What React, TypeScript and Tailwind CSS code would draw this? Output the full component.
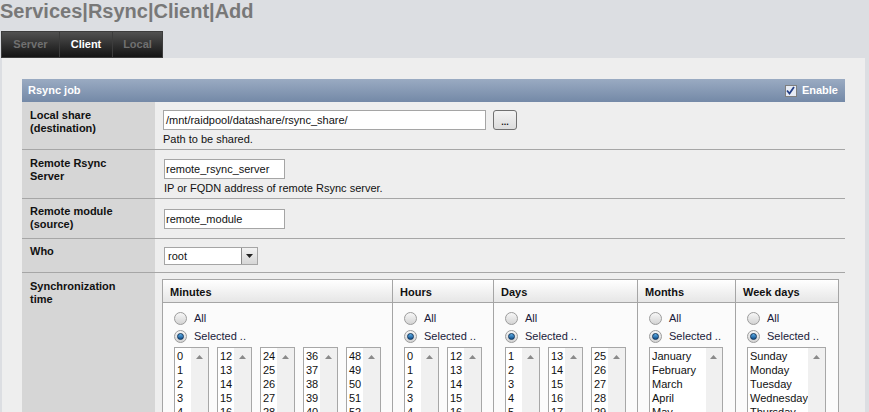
import React from 'react';

const range = (a: number, b: number) => Array.from({ length: b - a + 1 }, (_, i) => String(a + i));

function Radio({ checked }: { checked?: boolean }) {
    return (
        <span className="relative inline-flex h-[13px] w-[13px] items-center justify-center rounded-full border border-[#9c9c9c] bg-gradient-to-b from-[#f7f7f7] to-[#d4d4d4]">
            {checked && (
                <span className="h-[7px] w-[7px] rounded-full border border-[#10345a] bg-gradient-to-b from-[#5fb0e8] to-[#0d4f8c]" />
            )}
        </span>
    );
}

function ListBox({ items, w }: { items: string[]; w: string }) {
    return (
        <div className={`flex h-[72px] shrink-0 overflow-hidden border border-[#a7a7a7] bg-white ${w}`}>
            <div className="flex-1 pl-[2px] pt-[1px] leading-[14px] text-[#111]">
                {items.map((i) => (
                    <div key={i}>{i}</div>
                ))}
            </div>
            <div className="flex w-[17px] justify-center bg-[#f0f0f0] pt-[7px]">
                <svg width="7" height="4" viewBox="0 0 7 4">
                    <path d="M0 4 L3.5 0 L7 4 Z" fill="#8a8a8a" />
                </svg>
            </div>
        </div>
    );
}

function SyncCol({ title, w, lists }: { title: string; w: string; lists: { items: string[]; w: string }[] }) {
    return (
        <div className={`flex flex-col border-r border-[#a5a5a5] last:border-r-0 ${w}`}>
            <div className="h-[23px] border-b border-[#a5a5a5] bg-gradient-to-b from-white to-[#e6e6e6] pl-[7px] pt-[4px] font-bold text-[#111]">
                {title}
            </div>
            <div className="bg-[#fbfbfb] pl-[11px] pt-[6px]">
                <div className="flex h-[18px] items-center gap-[7px] text-[#1a1a3a]">
                    <Radio />
                    <span>All</span>
                </div>
                <div className="flex h-[18px] items-center gap-[7px] text-[#1a1a3a]">
                    <Radio checked />
                    <span>Selected ..</span>
                </div>
                <div className="mt-[2px] flex gap-[8px]">
                    {lists.map((l, i) => (
                        <ListBox key={i} items={l.items} w={l.w} />
                    ))}
                </div>
            </div>
        </div>
    );
}

export default function App() {
    const months = ['January', 'February', 'March', 'April', 'May', 'June', 'July', 'August', 'September', 'October', 'November', 'December'];
    const days = ['Sunday', 'Monday', 'Tuesday', 'Wednesday', 'Thursday', 'Friday', 'Saturday'];

    return (
        <div className="h-screen overflow-hidden bg-[#dcdee2] font-['Liberation_Sans',Arial,sans-serif] text-[11px] text-[#111]">
            <h1 className="h-[31px] text-[20px] font-bold leading-[23px] text-[#787878]">
                Services|Rsync|Client|Add
            </h1>

            {/* tabs */}
            <div className="ml-[1px] flex h-[27px] font-bold">
                <div className="flex w-[59px] items-center justify-center border border-[#3c3c3c] bg-gradient-to-b from-[#515151] to-[#151515] text-[#707070]">Server</div>
                <div className="flex w-[53px] items-center justify-center border border-l-0 border-[#3c3c3c] bg-gradient-to-b from-[#515151] to-[#151515] text-white">Client</div>
                <div className="flex w-[50px] items-center justify-center border border-l-0 border-[#3c3c3c] bg-gradient-to-b from-[#515151] to-[#151515] text-[#707070]">Local</div>
            </div>

            {/* panel */}
            <div className="ml-[2px] w-[863px] bg-[#eeeeee] px-[20px] pb-[20px] pt-[21px]">
                <div className="flex h-[23px] items-center justify-between bg-gradient-to-b from-[#9aabc2] to-[#7489a7] pl-[6px] pr-[7px] font-bold text-white">
                    <span>Rsync job</span>
                    <span className="flex items-center gap-[5px]">
                        <span className="flex h-[12px] w-[12px] items-center justify-center border border-[#7f7f7f] bg-[#e6ebf4]">
                            <svg width="9" height="9" viewBox="0 0 9 9">
                                <path d="M1 4.5 L3.5 7.5 L8 1" stroke="#243f86" strokeWidth="1.8" fill="none" />
                            </svg>
                        </span>
                        Enable
                    </span>
                </div>

                {/* rows */}
                <div className="flex h-[48px] border-b border-[#a6a6a6]">
                    <div className="w-[133px] bg-[#d6d6d6] pl-[8px] pt-[7px] font-bold leading-[13px]">
                        Local share<br />(destination)
                    </div>
                    <div className="flex-1 pl-[8px] pt-[8px]">
                        <div className="flex items-center gap-[7px]">
                            <div className="flex h-[20px] w-[323px] items-center border border-[#a5a5a5] bg-white pl-[2px]">/mnt/raidpool/datashare/rsync_share/</div>
                            <div className="flex h-[20px] w-[24px] items-end justify-center rounded-[3px] border border-[#707070] bg-gradient-to-b from-[#f3f3f3] to-[#dcdcdc] pb-[4px] text-[9px] leading-[6px] font-bold">...</div>
                        </div>
                        <div className="mt-[3px] leading-[13px]">Path to be shared.</div>
                    </div>
                </div>

                <div className="flex h-[49px] border-b border-[#a6a6a6]">
                    <div className="w-[133px] bg-[#d6d6d6] pl-[8px] pt-[7px] font-bold leading-[13px]">
                        Remote Rsync<br />Server
                    </div>
                    <div className="flex-1 pl-[9px] pt-[9px]">
                        <div className="flex h-[20px] w-[121px] items-center border border-[#a5a5a5] bg-white pl-[1px]">remote_rsync_server</div>
                        <div className="mt-[3px] leading-[13px]">IP or FQDN address of remote Rsync server.</div>
                    </div>
                </div>

                <div className="flex h-[40px] border-b border-[#a6a6a6]">
                    <div className="w-[133px] bg-[#d6d6d6] pl-[8px] pt-[6px] font-bold leading-[13px]">
                        Remote module<br />(source)
                    </div>
                    <div className="flex-1 pl-[9px] pt-[10px]">
                        <div className="flex h-[20px] w-[121px] items-center border border-[#a5a5a5] bg-white pl-[1px]">remote_module</div>
                    </div>
                </div>

                <div className="flex h-[34px] border-b border-[#a6a6a6]">
                    <div className="w-[133px] bg-[#d6d6d6] pl-[8px] pt-[6px] font-bold leading-[13px]">Who</div>
                    <div className="flex-1 pl-[9px] pt-[8px]">
                        <div className="flex h-[18px] w-[94px] items-center border border-[#a5a5a5] bg-white">
                            <span className="flex-1 pl-[3px]">root</span>
                            <span className="flex h-[16px] w-[16px] items-center justify-center border-l border-[#8a8a8a] bg-gradient-to-b from-[#f2f2f2] to-[#d6d6d6]">
                                <svg width="7" height="4" viewBox="0 0 7 4">
                                    <path d="M0 0 L7 0 L3.5 4 Z" fill="#222" />
                                </svg>
                            </span>
                        </div>
                    </div>
                </div>

                <div className="flex">
                    <div className="w-[133px] bg-[#d6d6d6] pl-[8px] pt-[7px] font-bold leading-[13px]">
                        Synchronization<br />time
                    </div>
                    <div className="flex-1 pl-[7px] pt-[6px]">
                        <div className="flex w-[677px] border border-[#a5a5a5]">
                            <SyncCol
                                title="Minutes"
                                w="w-[230px]"
                                lists={[
                                    { items: range(0, 11), w: 'w-[35px]' },
                                    { items: range(12, 23), w: 'w-[35px]' },
                                    { items: range(24, 35), w: 'w-[35px]' },
                                    { items: range(36, 47), w: 'w-[35px]' },
                                    { items: range(48, 59), w: 'w-[35px]' },
                                ]}
                            />
                            <SyncCol
                                title="Hours"
                                w="w-[101px]"
                                lists={[
                                    { items: range(0, 11), w: 'w-[35px]' },
                                    { items: range(12, 23), w: 'w-[35px]' },
                                ]}
                            />
                            <SyncCol
                                title="Days"
                                w="w-[144px]"
                                lists={[
                                    { items: range(1, 12), w: 'w-[35px]' },
                                    { items: range(13, 24), w: 'w-[35px]' },
                                    { items: range(25, 31), w: 'w-[35px]' },
                                ]}
                            />
                            <SyncCol title="Months" w="w-[98px]" lists={[{ items: months, w: 'w-[74px]' }]} />
                            <SyncCol title="Week days" w="flex-1" lists={[{ items: days, w: 'w-[79px]' }]} />
                        </div>
                    </div>
                </div>
            </div>
        </div>
    );
}
